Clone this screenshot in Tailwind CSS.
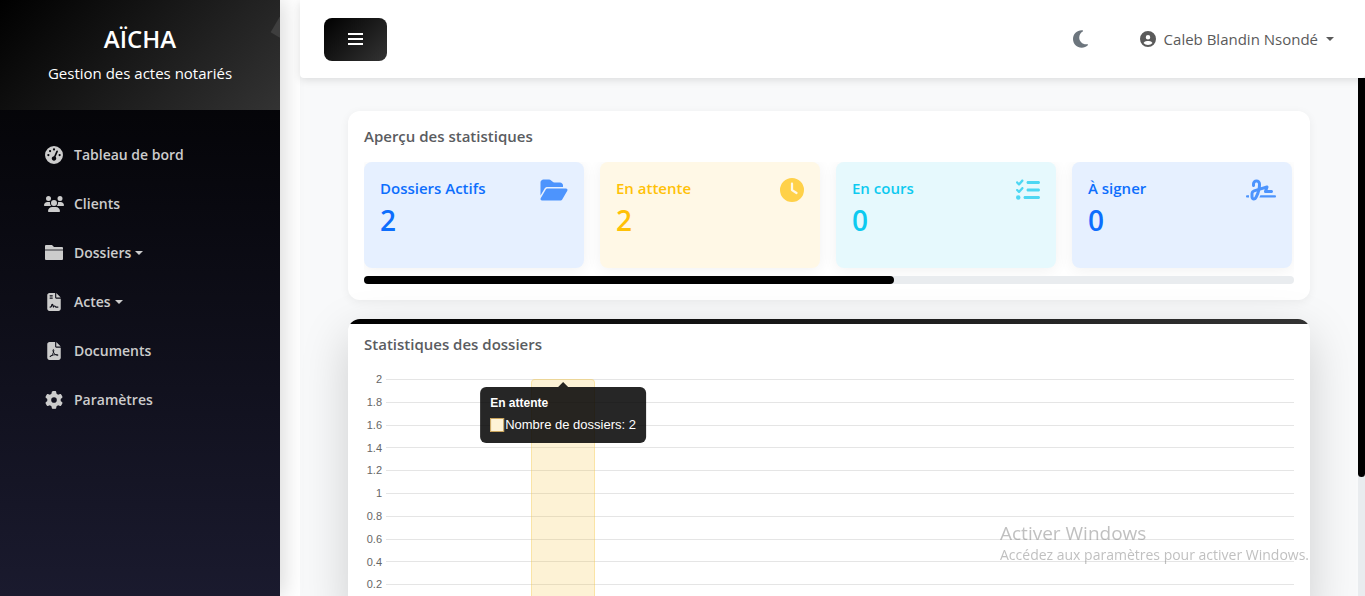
<!DOCTYPE html>
<html lang="fr">
<head>
    <meta charset="UTF-8">
    <meta name="viewport" content="width=device-width, initial-scale=1.0">
    <title>AÏCHA - Tableau de bord</title>
    <script src="https://cdn.jsdelivr.net/npm/@tailwindcss/browser@4"></script>
</head>
<body class="flex h-screen overflow-hidden bg-white font-['Open_Sans','Noto_Sans',sans-serif] text-[15px] text-[#5a5c5f]">

    <!-- Sidebar -->
    <aside class="relative z-10 flex w-[280px] shrink-0 flex-col bg-linear-to-b/srgb from-black to-[#1a1a2e] shadow-[4px_0_20px_rgba(0,0,0,0.15)]">
        <div class="relative flex h-[110px] flex-col items-center overflow-hidden bg-linear-135/srgb from-black to-[#333333] pt-6 text-white">
            <div class="absolute top-[5px] -right-[38px] size-10 rotate-30 bg-white/10"></div>
            <h1 class="text-2xl leading-[30px] font-semibold">AÏCHA</h1>
            <p class="mt-[7px] leading-6">Gestion des actes notariés</p>
        </div>
        <nav class="flex flex-col gap-1 px-11 pt-[22px] text-sm font-semibold text-[#cccccc]">
            <a href="#" class="flex h-[45px] items-center gap-[10px]">
                <svg class="h-[18px] w-5" viewBox="0 0 512 512" fill="currentColor"><path d="M0 256a256 256 0 1 1 512 0A256 256 0 1 1 0 256zM288 96a32 32 0 1 0 -64 0 32 32 0 1 0 64 0zM256 416c35.3 0 64-28.7 64-64c0-17.4-6.9-33.1-18.1-44.6L366 161.7c5.3-12.1-.2-26.3-12.3-31.6s-26.3 .2-31.6 12.3L257.9 288c-.6 0-1.3 0-1.9 0c-35.3 0-64 28.7-64 64s28.7 64 64 64zM176 144a32 32 0 1 0 -64 0 32 32 0 1 0 64 0zM96 288a32 32 0 1 0 0-64 32 32 0 1 0 0 64zm352-32a32 32 0 1 0 -64 0 32 32 0 1 0 64 0z"/></svg>
                Tableau de bord
            </a>
            <a href="#" class="flex h-[45px] items-center gap-[10px]">
                <svg class="h-[18px] w-5 overflow-visible" viewBox="0 0 640 512" fill="currentColor"><path d="M144 0a80 80 0 1 1 0 160A80 80 0 1 1 144 0zM512 0a80 80 0 1 1 0 160A80 80 0 1 1 512 0zM0 298.7C0 239.8 47.8 192 106.7 192l42.7 0c15.9 0 31 3.5 44.6 9.7c-1.3 7.2-1.9 14.7-1.9 22.3c0 38.2 16.8 72.5 43.3 96c-.2 0-.4 0-.7 0L21.3 320C9.6 320 0 310.4 0 298.7zM405.3 320c-.2 0-.4 0-.7 0c26.6-23.5 43.3-57.8 43.3-96c0-7.6-.7-15-1.9-22.3c13.6-6.3 28.7-9.7 44.6-9.7l42.7 0C592.2 192 640 239.8 640 298.7c0 11.8-9.6 21.3-21.3 21.3l-213.3 0zM224 224a96 96 0 1 1 192 0 96 96 0 1 1 -192 0zM128 485.3C128 411.7 187.7 352 261.3 352l117.3 0C452.3 352 512 411.7 512 485.3c0 14.7-11.9 26.7-26.7 26.7l-330.7 0c-14.7 0-26.7-11.9-26.7-26.7z"/></svg>
                Clients
            </a>
            <button type="button" class="flex h-[45px] items-center gap-[10px]">
                <svg class="h-[18px] w-5" viewBox="0 0 20 18" fill="currentColor"><path d="M2 1h6l2 2h8q1 0 1 1v1H1V2q0-1 1-1z"/><path d="M1 5h18v2H1z" opacity=".6"/><path d="M1 7h18v8q0 1-1 1H2q-1 0-1-1z"/></svg>
                <span class="flex items-center gap-1">Dossiers
                    <svg class="h-1 w-2" viewBox="0 0 8 4" fill="currentColor"><path d="M0 0h8L4 4z"/></svg>
                </span>
            </button>
            <button type="button" class="flex h-[45px] items-center gap-[10px]">
                <svg class="h-[18px] w-5" viewBox="0 0 384 512" fill="currentColor"><path d="M64 0C28.7 0 0 28.7 0 64V448c0 35.3 28.7 64 64 64H320c35.3 0 64-28.7 64-64V160H256c-17.7 0-32-14.3-32-32V0H64zM256 0V128H384L256 0zM80 64h64c8.8 0 16 7.2 16 16s-7.2 16-16 16H80c-8.8 0-16-7.2-16-16s7.2-16 16-16zm0 64h64c8.8 0 16 7.2 16 16s-7.2 16-16 16H80c-8.8 0-16-7.2-16-16s7.2-16 16-16zm54.2 253.8c-6.1 20.3-24.8 34.2-46 34.2H80c-8.8 0-16-7.2-16-16s7.2-16 16-16h8.2c7.1 0 13.3-4.6 15.3-11.4l14.9-49.5c3.4-11.3 13.8-19.1 25.6-19.1s22.2 7.7 25.6 19.1l11.6 38.6c7.4-6.2 16.8-9.7 26.8-9.7c15.9 0 30.4 9 37.5 23.2l4.4 8.8H304c8.8 0 16 7.2 16 16s-7.2 16-16 16H240c-6.1 0-11.6-3.4-14.3-8.8l-8.8-17.7c-1.7-3.4-5.1-5.5-8.8-5.5s-7.2 2.1-8.8 5.5l-8.8 17.7c-2.9 5.9-9.2 9.4-15.7 8.8s-12.1-5.1-13.9-11.3L144 349l-9.8 32.8z"/></svg>
                <span class="flex items-center gap-1">Actes
                    <svg class="h-1 w-2" viewBox="0 0 8 4" fill="currentColor"><path d="M0 0h8L4 4z"/></svg>
                </span>
            </button>
            <a href="#" class="flex h-[45px] items-center gap-[10px]">
                <svg class="h-[18px] w-5" viewBox="0 0 384 512" fill="currentColor"><path d="M64 0C28.7 0 0 28.7 0 64V448c0 35.3 28.7 64 64 64H320c35.3 0 64-28.7 64-64V160H256c-17.7 0-32-14.3-32-32V0H64zM256 0V128H384L256 0z"/><path d="M82 418c46-12 100-100 104-180c1-32-28-32-24 4c8 60 56 120 118 138c40 10 40-24-10-24c-60 0-120 16-168 38c-28 14-34 28-20 24z" fill="none" stroke="#0f1019" stroke-width="27"/></svg>
                Documents
            </a>
            <a href="#" class="flex h-[45px] items-center gap-[10px]">
                <svg class="h-[18px] w-5" viewBox="0 0 512 512" fill="currentColor"><path d="M495.9 166.6c3.2 8.7 .5 18.4-6.4 24.6l-43.3 39.4c1.1 8.3 1.7 16.8 1.7 25.4s-.6 17.1-1.7 25.4l43.3 39.4c6.9 6.2 9.6 15.9 6.4 24.6c-4.4 11.9-9.7 23.3-15.8 34.3l-4.7 8.1c-6.6 11-14 21.4-22.1 31.2c-5.9 7.2-15.7 9.6-24.5 6.8l-55.7-17.7c-13.4 10.3-28.2 18.9-44 25.4l-12.5 57.1c-2 9.1-9 16.3-18.2 17.8c-13.8 2.3-28 3.5-42.5 3.5s-28.7-1.2-42.5-3.5c-9.2-1.5-16.2-8.7-18.2-17.8l-12.5-57.1c-15.8-6.5-30.6-15.1-44-25.4L83.1 425.9c-8.8 2.8-18.6 .3-24.5-6.8c-8.1-9.8-15.5-20.2-22.1-31.2l-4.7-8.1c-6.1-11-11.4-22.4-15.8-34.3c-3.2-8.7-.5-18.4 6.4-24.6l43.3-39.4C64.6 273.1 64 264.6 64 256s.6-17.1 1.7-25.4L22.4 191.2c-6.9-6.2-9.6-15.9-6.4-24.6c4.4-11.9 9.7-23.3 15.8-34.3l4.7-8.1c6.6-11 14-21.4 22.1-31.2c5.9-7.2 15.7-9.6 24.5-6.8l55.7 17.7c13.4-10.3 28.2-18.9 44-25.4l12.5-57.1c2-9.1 9-16.3 18.2-17.8C227.3 1.2 241.5 0 256 0s28.7 1.2 42.5 3.5c9.2 1.5 16.2 8.7 18.2 17.8l12.5 57.1c15.8 6.5 30.6 15.1 44 25.4l55.7-17.7c8.8-2.8 18.6-.3 24.5 6.8c8.1 9.8 15.5 20.2 22.1 31.2l4.7 8.1c6.1 11 11.4 22.4 15.8 34.3zM256 336a80 80 0 1 0 0-160 80 80 0 1 0 0 160z"/></svg>
                Paramètres
            </a>
        </nav>
    </aside>

    <div class="ml-5 flex min-w-0 flex-1 flex-col bg-[#f8f9fa]">

        <!-- Top bar -->
        <header class="z-10 flex h-[78px] shrink-0 items-center justify-between rounded-b bg-white px-6 shadow-[0_2px_8px_rgba(0,0,0,0.12)]">
            <button type="button" aria-label="Menu" class="flex h-[43px] w-[63px] items-center justify-center rounded-lg bg-linear-135/srgb from-black to-[#333333] text-white">
                <svg class="h-3 w-4" viewBox="0 0 16 12" fill="currentColor"><path d="M0 0h15v2H0zM0 5h15v2H0zM0 10h15v2H0z"/></svg>
            </button>
            <div class="flex items-center gap-[51px] pr-[7px]">
                <button type="button" aria-label="Mode sombre" class="text-[#6c757d]">
                    <svg class="h-5 w-[17px]" viewBox="0 0 384 512" fill="currentColor"><path d="M223.5 32C100 32 0 132.3 0 256S100 480 223.5 480c60.6 0 115.5-24.2 155.8-63.4c5-4.9 6.3-12.5 3.1-18.7s-10.1-9.7-17-8.5c-9.8 1.7-19.8 2.6-30.1 2.6c-96.9 0-175.5-78.8-175.5-176c0-65.8 36-123.1 89.3-153.3c6.1-3.5 9.2-10.5 7.7-17.3s-7.3-11.9-14.3-12.5c-6.3-.5-12.6-.8-19-.8z"/></svg>
                </button>
                <button type="button" class="flex items-center gap-2 text-[#5a5a5a]">
                    <svg class="size-4" viewBox="0 0 512 512" fill="currentColor"><path d="M399 384.2C376.9 345.8 335.4 320 288 320H224c-47.4 0-88.9 25.8-111 64.2c35.2 39.2 86.2 63.8 143 63.8s107.8-24.7 143-63.8zM0 256a256 256 0 1 1 512 0A256 256 0 1 1 0 256zm256 16a72 72 0 1 0 0-144 72 72 0 1 0 0 144z"/></svg>
                    Caleb Blandin Nsondé
                    <svg class="h-1 w-2" viewBox="0 0 8 4" fill="currentColor"><path d="M0 0h8L4 4z"/></svg>
                </button>
            </div>
        </header>

        <div class="flex min-h-0 flex-1">
            <main class="flex min-w-0 flex-1 flex-col gap-[19px] overflow-hidden px-12 pt-[33px]">

                <!-- Statistics overview -->
                <section class="shrink-0 rounded-xl bg-white p-4 shadow-[0_2px_10px_rgba(0,0,0,0.06)]">
                    <h2 class="mb-4 leading-[19px] font-semibold">Aperçu des statistiques</h2>
                    <div class="flex gap-4 overflow-hidden pb-2">
                        <div class="flex h-[106px] w-[220px] shrink-0 justify-between rounded-lg bg-[#e6f0ff] p-4 text-[#0d6efd] shadow-[0_2px_15px_rgba(0,0,0,0.06)]">
                            <div>
                                <h3 class="leading-5 font-semibold">Dossiers Actifs</h3>
                                <p class="mt-1 text-[28px] leading-9 font-semibold">2</p>
                            </div>
                            <svg class="h-6 w-7 opacity-70" viewBox="0 0 576 512" fill="currentColor"><path d="M88.7 223.8L0 375.8V96C0 60.7 28.7 32 64 32H181.5c17 0 33.3 6.7 45.3 18.7l26.5 26.5c12 12 28.3 18.7 45.3 18.7H416c35.3 0 64 28.7 64 64v32H144c-22.8 0-43.8 12.1-55.3 31.8zm27.6 16.1C122.1 230 132.6 224 144 224H544c11.5 0 22 6.1 27.7 16.1s5.7 22.2-.1 32.1l-112 192C453.9 474 443.4 480 432 480H32c-11.5 0-22-6.1-27.7-16.1s-5.7-22.2 .1-32.1l112-192z"/></svg>
                        </div>
                        <div class="flex h-[106px] w-[220px] shrink-0 justify-between rounded-lg bg-[#fff8e6] p-4 text-[#ffc107] shadow-[0_2px_15px_rgba(0,0,0,0.06)]">
                            <div>
                                <h3 class="leading-5 font-semibold">En attente</h3>
                                <p class="mt-1 text-[28px] leading-9 font-semibold">2</p>
                            </div>
                            <svg class="size-6 opacity-70" viewBox="0 0 512 512" fill="currentColor"><path d="M256 0a256 256 0 1 1 0 512A256 256 0 1 1 256 0zM232 120V256c0 8 4 15.5 10.7 20l96 64c11 7.4 25.9 4.4 33.3-6.7s4.4-25.9-6.7-33.3L280 243.2V120c0-13.3-10.7-24-24-24s-24 10.7-24 24z"/></svg>
                        </div>
                        <div class="flex h-[106px] w-[220px] shrink-0 justify-between rounded-lg bg-[#e6f9fd] p-4 text-[#0dcaf0] shadow-[0_2px_15px_rgba(0,0,0,0.06)]">
                            <div>
                                <h3 class="leading-5 font-semibold">En cours</h3>
                                <p class="mt-1 text-[28px] leading-9 font-semibold">0</p>
                            </div>
                            <svg class="size-6 opacity-70" viewBox="0 0 512 512" fill="currentColor"><path d="M152.1 38.2c9.9 8.9 10.7 24 1.8 33.9l-72 80c-4.4 4.9-10.6 7.8-17.2 7.9s-12.9-2.4-17.6-7L7 113C-2.3 103.6-2.3 88.4 7 79s24.6-9.4 33.9 0l22.1 22.1 55.1-61.2c8.9-9.9 24-10.7 33.9-1.8zm0 160c9.9 8.9 10.7 24 1.8 33.9l-72 80c-4.4 4.9-10.6 7.8-17.2 7.9s-12.9-2.4-17.6-7L7 273c-9.4-9.4-9.4-24.6 0-33.9s24.6-9.4 33.9 0l22.1 22.1 55.1-61.2c8.9-9.9 24-10.7 33.9-1.8zM224 96c0-17.7 14.3-32 32-32H480c17.7 0 32 14.3 32 32s-14.3 32-32 32H256c-17.7 0-32-14.3-32-32zm0 160c0-17.7 14.3-32 32-32H480c17.7 0 32 14.3 32 32s-14.3 32-32 32H256c-17.7 0-32-14.3-32-32zM160 416c0-17.7 14.3-32 32-32H480c17.7 0 32 14.3 32 32s-14.3 32-32 32H192c-17.7 0-32-14.3-32-32zM48 368a48 48 0 1 1 0 96 48 48 0 1 1 0-96z"/></svg>
                        </div>
                        <div class="flex h-[106px] w-[220px] shrink-0 justify-between rounded-lg bg-[#e6f0ff] p-4 text-[#0d6efd] shadow-[0_2px_15px_rgba(0,0,0,0.06)]">
                            <div>
                                <h3 class="leading-5 font-semibold">À signer</h3>
                                <p class="mt-1 text-[28px] leading-9 font-semibold">0</p>
                            </div>
                            <svg class="h-6 w-[30px] opacity-70" viewBox="0 0 640 512" fill="currentColor"><path d="M192 128c0-17.7 14.3-32 32-32s32 14.3 32 32v7.8c0 27.7-2.4 55.3-7.1 82.5l-84.4 25.3c-40.6 12.2-68.4 49.6-68.4 92v71.9c0 40 32.5 72.5 72.5 72.5c26 0 50-13.9 62.9-36.5l13.9-24.3c26.8-47 46.5-97.7 58.4-150.5l94.4-28.3-12.5 37.5c-3.3 9.8-1.6 20.5 4.4 28.8s15.7 13.3 26 13.3H544c17.7 0 32-14.3 32-32s-14.3-32-32-32H460.4l18-53.9c3.8-11.3 .9-23.8-7.4-32.4s-20.7-11.8-32.2-8.4L316.4 198.1c2.4-20.7 3.6-41.4 3.6-62.3V128c0-53-43-96-96-96s-96 43-96 96v32c0 17.7 14.3 32 32 32s32-14.3 32-32V128zm-9.2 177l49-14.7c-10.4 33.8-24.5 66.4-42.1 97.2l-13.9 24.3c-1.5 2.6-4.3 4.3-7.4 4.3c-4.7 0-8.5-3.8-8.5-8.5V335.6c0-14.1 9.3-26.6 22.8-30.7zM24 368c-13.3 0-24 10.7-24 24s10.7 24 24 24H64.3c-.2-2.8-.3-5.6-.3-8.5V368H24zm592 48c13.3 0 24-10.7 24-24s-10.7-24-24-24H305.9c-6.7 16.3-14.2 32.3-22.3 48H616z"/></svg>
                        </div>
                    </div>
                    <div class="h-2 rounded-full bg-[#e9ecef]">
                        <div class="h-2 w-[57%] rounded-full bg-black"></div>
                    </div>
                </section>

                <!-- Chart -->
                <section class="relative shrink-0 rounded-xl bg-white p-4 shadow-[0_16px_48px_rgba(0,0,0,0.175)]">
                    <div class="absolute inset-0 overflow-hidden rounded-xl">
                        <div class="h-[5px] bg-linear-135/srgb from-black to-[#333333]"></div>
                    </div>
                    <h2 class="mb-4 leading-[19px] font-semibold">Statistiques des dossiers</h2>
                    <div class="relative font-['Liberation_Sans',Arial,sans-serif]">
                        <div id="chart-rows" class="grid h-[228px] grid-rows-10 text-[11px] text-[#666666]"></div>
                        <div class="absolute top-[9px] right-0 bottom-0 left-[22px]">
                            <div class="absolute top-0 bottom-0 left-[16%] w-[7%] rounded-t border border-b-0 border-[#f6c23e]/30 bg-[#f6c23e]/22">
                                <div class="absolute top-[7px] left-1/2 -translate-x-1/2 rounded-md bg-black/85 px-[10px] py-[6px] whitespace-nowrap text-white">
                                    <div class="absolute -top-[5px] left-1/2 -translate-x-1/2 border-x-[5px] border-b-[5px] border-x-transparent border-b-black/85"></div>
                                    <p class="text-xs leading-5 font-bold">En attente</p>
                                    <p class="flex items-center gap-[1px] text-[13px] leading-6">
                                        <span class="size-[14px] border border-[#c9a45c] bg-[#fef3d6]"></span>
                                        Nombre de dossiers: 2
                                    </p>
                                </div>
                            </div>
                        </div>
                    </div>
                </section>
            </main>

            <div class="w-[7px] shrink-0 bg-[#e9ecef]">
                <div class="h-[77%] rounded-b-full bg-black"></div>
            </div>
        </div>
    </div>

    <!-- Activation notice -->
    <div class="pointer-events-none fixed right-[52px] bottom-[31px] z-20 w-[313px] whitespace-nowrap text-[#828282]/50">
        <p class="text-[19px] leading-6">Activer Windows</p>
        <p class="text-sm leading-5">Accédez aux paramètres pour activer Windows.</p>
    </div>

    <script>
        const ticks = ['2', '1.8', '1.6', '1.4', '1.2', '1', '0.8', '0.6', '0.4', '0.2'];
        const rows = document.getElementById('chart-rows');

        ticks.forEach((tick) => {
            const row = document.createElement('div');
            row.className = 'flex h-[19px] items-center gap-1';
            row.innerHTML = `<span class="w-[18px] text-right">${tick}</span><span class="h-px flex-1 bg-[#e5e5e5]"></span>`;
            rows.appendChild(row);
        });
    </script>
</body>
</html>
